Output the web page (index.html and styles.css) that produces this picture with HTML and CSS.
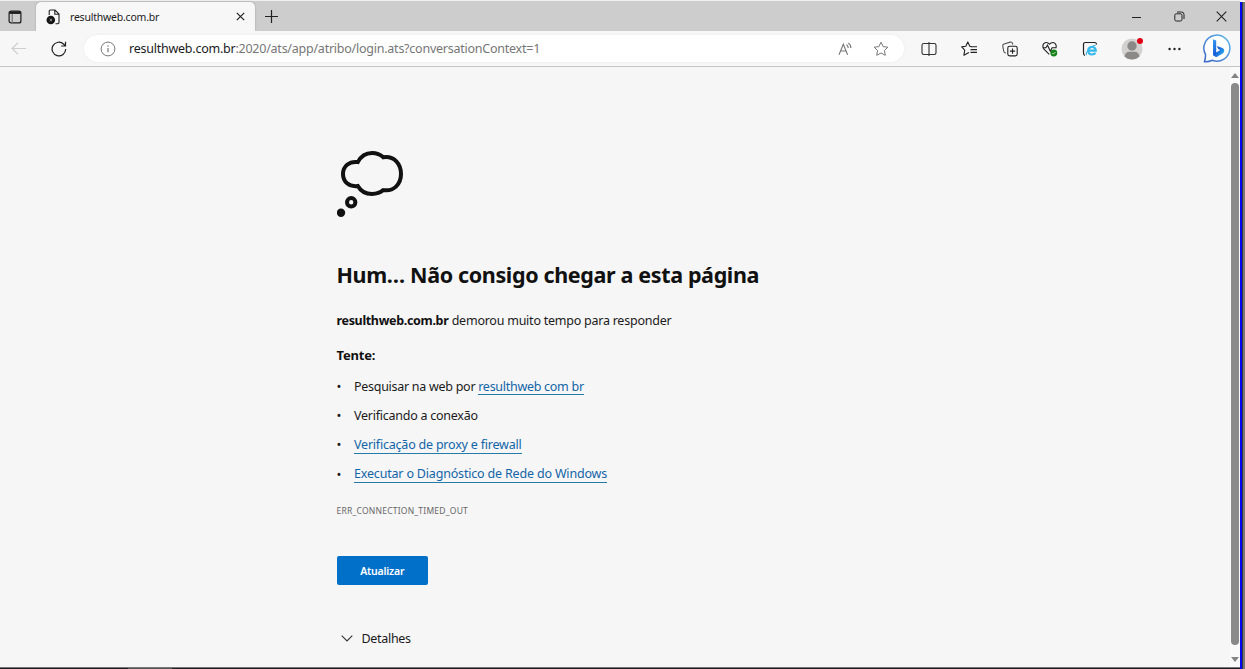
FILE: index.html
```html
<!DOCTYPE html>
<html lang="pt-BR">
<head>
    <meta charset="UTF-8">
    <meta name="viewport" content="width=device-width, initial-scale=1.0">
    <title>resulthweb.com.br</title>
    <link rel="stylesheet" href="styles.css">
</head>
<body>
    <div class="screen">
        <div class="window">
            <!-- Tabs -->
            <div class="tab-strip">
                <div class="tab-menu">
                    <svg width="14" height="14" viewBox="0 0 14 14" fill="none" stroke="#1b1b1b" stroke-width="1.2"><rect x="1.1" y="1.1" width="11.8" height="11.8" rx="2"/><path d="M4.2 4v9" stroke="#777"/><path d="M1.5 2.7h11" stroke-width="2.4"/></svg>
                </div>
                <div class="tab">
                    <svg class="favicon" width="15" height="16" viewBox="0 0 15 16"><path d="M3.2 6V2.2Q3.2 1 4.4 1H9l4 4v8.5q0 1.2-1.2 1.2H9.5M8.8 1v4.2H13" fill="none" stroke="#222" stroke-width="1.1"/><circle cx="4.8" cy="11" r="4.3" fill="#151515"/><path d="M3.6 9.8l2.4 2.4m0-2.4l-2.4 2.4" stroke="#999" stroke-width="1"/></svg>
                    <span class="tab-title">resulthweb.com.br</span>
                    <svg class="tab-close" width="9" height="9" viewBox="0 0 9 9" stroke="#222" stroke-width="1.2"><path d="M.8.8l7.4 7.4M8.2.8L.8 8.2"/></svg>
                </div>
                <svg class="new-tab" width="13" height="13" viewBox="0 0 13 13" stroke="#222" stroke-width="1.2"><path d="M6.5 0v13M0 6.5h13"/></svg>
                <div class="window-controls">
                    <span class="control"><svg width="10" height="10" viewBox="0 0 10 10" stroke="#222"><path d="M0 5.5h9"/></svg></span>
                    <span class="control"><svg width="11" height="11" viewBox="0 0 11 11" fill="none" stroke="#222"><rect x=".8" y="2.8" width="7.2" height="7.2" rx="1.5"/><path d="M3 1h4.5Q10 1 10 3.5V8"/></svg></span>
                    <span class="control"><svg width="11" height="11" viewBox="0 0 11 11" stroke="#222" stroke-width="1.1"><path d="M.7.7l9.6 9.6M10.3.7L.7 10.3"/></svg></span>
                </div>
            </div>

            <!-- Toolbar -->
            <div class="toolbar">
                <div class="nav-buttons">
                    <svg width="15" height="13" viewBox="0 0 15 13" fill="none" stroke="#cfcfcf" stroke-width="1.2"><path d="M15 6.5H1M7 .7L1 6.5l6 5.8"/></svg>
                    <svg width="16" height="16" viewBox="0 0 16 16" fill="none" stroke="#222" stroke-width="1.2"><path d="M14.7 8a6.8 6.8 0 1 1-2-4.8L14.4 5M14.5.7V5h-4.3"/></svg>
                </div>
                <div class="address-bar">
                    <svg width="16" height="16" viewBox="0 0 16 16" fill="none" stroke="#777"><circle cx="8" cy="8" r="6.9"/><path d="M8 7v4.2M8 4.5v1.3" stroke-width="1.2"/></svg>
                    <span class="url"><b>resulthweb.com.br</b>:2020/ats/app/atribo/login.ats?conversationContext=1</span>
                    <svg class="read-aloud" width="16" height="14" viewBox="0 0 16 14" fill="none" stroke="#777" stroke-width="1.1"><path d="M1 12.7L5.3 2.3l4.3 10.4M2.6 9h5.5M8.5 2.7q1.6 1 1.8 3.4M10.3 1q2.4 1.5 2.6 5"/></svg>
                    <svg width="16" height="16" viewBox="0 0 16 16" fill="none" stroke="#777" stroke-linejoin="round"><path d="M8 1.2l2.1 4.4 4.8.6-3.5 3.3.9 4.8L8 12l-4.3 2.3.9-4.8L1.1 6.2l4.8-.6z"/></svg>
                </div>
                <div class="tools">
                    <span class="tool"><svg width="16" height="14" viewBox="0 0 16 14" fill="none" stroke="#333" stroke-width="1.1"><path d="M6 1.5H2.7Q1 1.5 1 3.2v7.6q0 1.7 1.7 1.7H6M10 1.5h3.3q1.7 0 1.7 1.7v7.6q0 1.7-1.7 1.7H10M6 1.5h4M6 12.5h4M8 0v14"/></svg></span>
                    <span class="tool"><svg width="16" height="16" viewBox="0 0 16 16" fill="none" stroke="#222" stroke-width="1.1" stroke-linejoin="round"><path d="M10.6 5.5l-1.8-.3L6.8.9 4.8 5.3.7 5.9l3 3.2-.8 5.2 5-2.7"/><path d="M9.5 5.8H16M9.5 8.6H16M9.5 11.4H16"/></svg></span>
                    <span class="tool"><svg width="16" height="16" viewBox="0 0 16 16" fill="none" stroke="#222" stroke-width="1.1"><path d="M4 12l-1-.3q-1-.4-1.3-1.5L.8 5.2Q.5 3.6 2 3l6.3-1.9q1.7-.4 2.2 1.3l.3 1.2" stroke="#555"/><rect x="5.8" y="5.2" width="9.4" height="9.7" rx="1.8"/><path d="M10.5 7.5v5.2M7.9 10.1h5.2"/></svg></span>
                    <span class="tool"><svg width="16" height="16" viewBox="0 0 16 16" fill="none" stroke="#222" stroke-width="1.1"><path d="M7.2 13.3L2 8.1Q-.2 4.9 1.8 2.6 4.7.1 7.5 3.2 10.3.1 13.2 2.6q1.8 2.1.5 4.7M.5 6.7h3.4l1.6-2.5 2.8 6 1.8-3.5h4.4"/><circle cx="11.8" cy="12" r="3.4" fill="#168217" stroke="none"/><path d="M10.3 12l1.1 1.1 2-2.1" stroke="#d9efd9" stroke-width=".9"/></svg></span>
                    <span class="tool"><svg width="16" height="16" viewBox="0 0 16 16" fill="none"><path d="M3 14.5Q1.5 14 1.5 12V3.5Q1.5 1.5 3.5 1.5h9q2 0 2 2" stroke="#222" stroke-width="1.2"/><path d="M4.6 14.2Q3.4 12.5 6.4 8.7 10 4.4 13.7 4.2" stroke="#28ace2"/><path d="M6.2 9.7h7.6q-.2-3.7-3.8-3.7-3.8 0-3.8 3.8 0 3.7 3.8 3.7 2.5 0 3.4-1.7" stroke="#35b8ec" stroke-width="2.2"/></svg></span>
                    <span class="tool wide profile"><svg width="22" height="22" viewBox="0 0 22 22"><circle cx="11" cy="11" r="10.5" fill="#d3d2d1"/><circle cx="11" cy="8" r="4.7" fill="#8b8988"/><path d="M3.4 18.2Q5 13.8 8 13.8h6q3 0 4.6 4.4a10.5 10.5 0 0 1-15.2 0z" fill="#8b8988"/></svg><i class="alert-dot"></i></span>
                    <span class="tool wide"><svg width="13" height="4" viewBox="0 0 13 4" fill="#222"><circle cx="1.6" cy="2" r="1.2"/><circle cx="6.5" cy="2" r="1.2"/><circle cx="11.4" cy="2" r="1.2"/></svg></span>
                    <span class="tool wide bing"><svg width="29" height="29" viewBox="0 0 29 29"><defs><linearGradient id="bubble" x1="0" y1="1" x2="1" y2="0"><stop offset="0" stop-color="#3965c5"/><stop offset=".5" stop-color="#4f8cda"/><stop offset="1" stop-color="#55b8ee"/></linearGradient><linearGradient id="b" x1="0" y1="0" x2="1" y2="1"><stop offset="0" stop-color="#3ba0f5"/><stop offset=".5" stop-color="#155fd8"/><stop offset="1" stop-color="#36c6f1"/></linearGradient></defs><path d="M1.5 27.7Q2.5 25 2.6 20.6A13 13 0 1 1 9.3 26.3Q5.5 28 1.5 27.7z" fill="#fff" stroke="url(#bubble)" stroke-width="1.5"/><path d="M10 5.2l3.2 1.2v12l4-2.3-2-1-1.4-3.2 5.7 2.1q1.8.8 1.8 2.8 0 1.7-1.5 2.6l-6.6 3.9-3.2-2z" fill="url(#b)"/></svg></span>
                </div>
            </div>

            <!-- Page -->
            <div class="page">
                <div class="error-page">
                    <svg class="thought" width="68" height="68" viewBox="0 0 68 68" fill="none" stroke="#111" stroke-width="4"><path d="M20.8 12.1C24.5 5.2 29.7 3 35 3 39.5 3 43.2 4.4 46.3 7.3 57.5 5.7 64 14.1 64 24.1 64 34.5 56.5 41.8 46.3 40.1 43 43 39.5 44 35 44 29.3 44 24 41.6 20.8 36 11.8 37.1 6 31.7 6 24.1 6 16.5 12 11 20.8 12.1Z"/><circle cx="14.2" cy="52.3" r="4.2"/><circle cx="4" cy="62.7" r="4.2" fill="#111" stroke="none"/></svg>
                    <h1>Hum… Não consigo chegar a esta página</h1>
                    <p class="summary"><b>resulthweb.com.br</b> <span>demorou muito tempo para responder</span></p>
                    <h2>Tente:</h2>
                    <ul>
                        <li><span class="try-search">Pesquisar na web por <a href="#">resulthweb com br</a></span></li>
                        <li><span class="try-connection">Verificando a conexão</span></li>
                        <li><a class="try-proxy" href="#">Verificação de proxy e firewall</a></li>
                        <li><a class="try-diagnostics" href="#">Executar o Diagnóstico de Rede do Windows</a></li>
                    </ul>
                    <div class="error-code">ERR_CONNECTION_TIMED_OUT</div>
                    <button>Atualizar</button>
                    <div class="details">
                        <svg width="12" height="7" viewBox="0 0 12 7" fill="none" stroke="#333" stroke-width="1.1"><path d="M.7.7L6 6 11.3.7"/></svg>
                        <span>Detalhes</span>
                    </div>
                </div>
                <div class="scrollbar">
                    <i class="arrow-up"></i>
                    <div class="thumb"></div>
                    <i class="arrow-down"></i>
                </div>
            </div>
            <div class="taskbar-edge"><i></i></div>
        </div>
        <div class="blue-edge"></div>
        <div class="gray-edge"></div>
    </div>
</body>
</html>
```
FILE: styles.css
```css
* {
    box-sizing: border-box;
}
body {
    margin: 0;
    font-family: "Noto Sans", "Open Sans", sans-serif;
    font-size: 12.5px;
    color: #1b1b1b;
    background: #f6f6f6;
    overflow: hidden;
}
svg {
    display: block;
    flex-shrink: 0;
}
.screen {
    display: flex;
    height: 669px;
    border-top: 1px solid #efefef;
}
.window {
    width: 1240px;
    display: flex;
    flex-direction: column;
}
.blue-edge {
    width: 2px;
    margin-top: 1px;
    background: #0505f0;
}
.gray-edge {
    width: 3px;
    margin-top: 1px;
    background: linear-gradient(90deg, #3b3b45 1px, #777 1px);
}

/* Tabs */
.tab-strip {
    display: flex;
    height: 30px;
    background: #cdcdcd;
}
.tab-menu {
    width: 36px;
    padding: 9px 0 0 8px;
}
.tab {
    display: flex;
    align-items: center;
    width: 219px;
    height: 29px;
    margin-top: 1px;
    padding: 0 10px;
    background: #f7f7f7;
    border-radius: 5px 5px 0 0;
    box-shadow: 0 0 2px rgba(0,0,0,0.25);
}
.tab-title {
    margin-left: 9px;
    font-size: 10.5px;
    letter-spacing: -0.22px;
}
.tab-close {
    margin-left: auto;
}
.new-tab {
    margin: 9px 0 0 10px;
}
.window-controls {
    display: flex;
    margin-left: auto;
    width: 124px;
}
.control {
    display: flex;
    flex-shrink: 0;
    width: 42px;
    justify-content: center;
    align-items: center;
    padding-top: 1px;
}

/* Toolbar */
.toolbar {
    display: flex;
    align-items: center;
    height: 36px;
    background: #f7f7f7;
    border-bottom: 1px solid #c3c3c3;
}
.nav-buttons {
    display: flex;
    align-items: center;
    gap: 25px;
    width: 84px;
    padding-left: 11px;
}
.address-bar {
    display: flex;
    flex-shrink: 0;
    align-items: center;
    width: 820px;
    height: 27px;
    padding: 0 15px 0 16px;
    background: #fff;
    border-radius: 14px;
    box-shadow: 0 0 3px rgba(0,0,0,0.06);
}
.url {
    margin-left: 13px;
    color: #767676;
    white-space: nowrap;
    letter-spacing: -0.24px;
}
.url b {
    font-weight: normal;
    color: #1b1b1b;
}
.read-aloud {
    margin-left: auto;
    margin-right: 19px;
}
.tools {
    display: flex;
    align-items: center;
    margin-left: 5px;
}
.tool {
    position: relative;
    display: flex;
    flex-shrink: 0;
    justify-content: center;
    width: 40.3px;
}
.tool.wide {
    width: 42px;
}
.tool.profile {
    margin-left: 1px;
}
.tool.bing {
    width: 44px;
}
.alert-dot {
    position: absolute;
    top: 0;
    right: 10px;
    width: 6px;
    height: 6px;
    border-radius: 50%;
    background: #df0014;
}

/* Page */
.page {
    display: flex;
    justify-content: space-between;
    height: 600px;
    background: #f6f6f6;
}
.error-page {
    margin-left: 336.5px;
    padding-top: 83px;
    white-space: nowrap;
}
h1 {
    margin: 42px 0 0;
    font-size: 21.5px;
    line-height: 30px;
    font-weight: 700;
    letter-spacing: -0.36px;
    color: #111;
}
.summary {
    margin: 22px 0 0;
    line-height: 18px;
}
.summary b {
    font-weight: 700;
    letter-spacing: -0.33px;
    color: #111;
}
.summary span {
    letter-spacing: -0.24px;
}
h2 {
    margin: 16px 0 0;
    font-size: 13px;
    line-height: 18px;
    font-weight: 700;
    letter-spacing: -0.2px;
    color: #111;
}
ul {
    margin: 9px 0 0;
    padding: 0;
    list-style: none;
}
li {
    display: flex;
    height: 29.2px;
    line-height: 28px;
}
li::before {
    content: "•";
    width: 17.5px;
    font-size: 13px;
    line-height: 27px;
}
a {
    display: inline-block;
    height: 16px;
    line-height: 16px;
    color: #1265a8;
    text-decoration: none;
    border-bottom: 1px solid #267ba9;
}
li > a {
    height: 17px;
    margin-top: 5.4px;
}
.try-search {
    letter-spacing: -0.28px;
}
.try-connection {
    letter-spacing: -0.25px;
}
.try-proxy {
    letter-spacing: -0.21px;
}
.try-diagnostics {
    letter-spacing: -0.18px;
}
.error-code {
    margin-top: 15px;
    font-size: 8.5px;
    line-height: 12px;
    letter-spacing: 0.23px;
    color: #666;
}
button {
    display: block;
    width: 91.5px;
    height: 29px;
    margin-top: 39px;
    padding: 1px 0 0;
    border: none;
    border-radius: 2px;
    background: #0070c9;
    color: #fff;
    font: 600 10.5px "Noto Sans", sans-serif;
    letter-spacing: -0.2px;
}
.details {
    display: flex;
    align-items: center;
    margin-top: 45px;
    padding-left: 4px;
    gap: 9px;
    line-height: 18px;
    letter-spacing: -0.3px;
}
.scrollbar {
    display: flex;
    flex-direction: column;
    align-items: center;
    width: 10px;
    background: #fafafa;
}
.arrow-up {
    margin-top: 6px;
    border: 4px solid transparent;
    border-top: none;
    border-bottom: 5px solid #858585;
}
.thumb {
    width: 8px;
    height: 562px;
    margin-top: 5px;
    border-radius: 4px;
    background: #8a8a8a;
}
.arrow-down {
    margin-top: 12px;
    border: 4px solid transparent;
    border-bottom: none;
    border-top: 5px solid #858585;
}
.taskbar-edge {
    height: 2px;
    background: #1c1a1d;
    border-top: 1px solid #777;
}
.taskbar-edge i {
    display: block;
    width: 44px;
    height: 1px;
    margin-left: 128px;
    background: #555;
}
```
